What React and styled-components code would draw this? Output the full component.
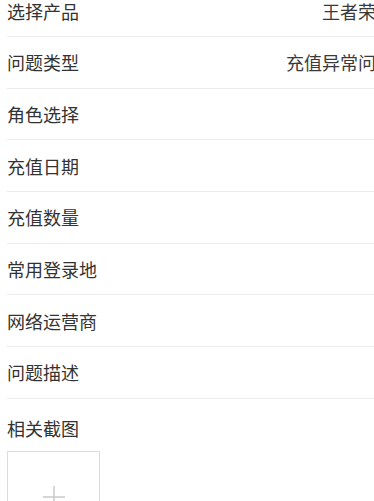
import React from 'react';
import styled, { createGlobalStyle } from 'styled-components';

const GlobalStyle = createGlobalStyle`
    html, body {
        margin: 0;
        padding: 0;
        background: #fff;
        overflow: hidden;
    }
    body {
        font-family: "Noto Sans CJK SC", "Noto Sans", sans-serif;
        color: #333;
    }
`;

const rows = [
    { label: '选择产品', value: '王者荣耀' },
    { label: '问题类型', value: '充值异常问题' },
    { label: '角色选择' },
    { label: '充值日期' },
    { label: '充值数量' },
    { label: '常用登录地' },
    { label: '网络运营商' },
    { label: '问题描述' },
];

const App = () => (
    <>
        <GlobalStyle />
        <Form>
            {rows.map((row) => (
                <Row key={row.label}>
                    <Label>{row.label}</Label>
                    {row.value && <Value>{row.value}</Value>}
                </Row>
            ))}
            <Section>
                <Label>相关截图</Label>
                <Upload>
                    <svg width="24" height="24" viewBox="0 0 24 24">
                        <line x1="12" y1="1" x2="12" y2="23" stroke="#c8c8c8" strokeWidth="1.5" />
                        <line x1="1" y1="12" x2="23" y2="12" stroke="#c8c8c8" strokeWidth="1.5" />
                    </svg>
                </Upload>
            </Section>
        </Form>
    </>
);

export default App;

const Form = styled.div`
    width: 401px;
    margin-top: -14.7px;
`;

const Row = styled.div`
    display: flex;
    align-items: center;
    justify-content: space-between;
    height: 50.7px;
    margin-left: 7px;
    padding-right: 7px;
    border-bottom: 1px solid #ececec;
`;

const Label = styled.div`
    font-size: 18px;
    line-height: 26px;
    color: #333;
`;

const Value = styled.div`
    font-size: 18px;
    line-height: 26px;
    color: #3a3a3a;
`;

const Section = styled.div`
    padding: 16px 7px 0;
    display: flex;
    flex-direction: column;
    gap: 10px;
`;

const Upload = styled.div`
    width: 91px;
    height: 91px;
    border: 1px solid #dcdcdc;
    display: flex;
    align-items: center;
    justify-content: center;
`;
